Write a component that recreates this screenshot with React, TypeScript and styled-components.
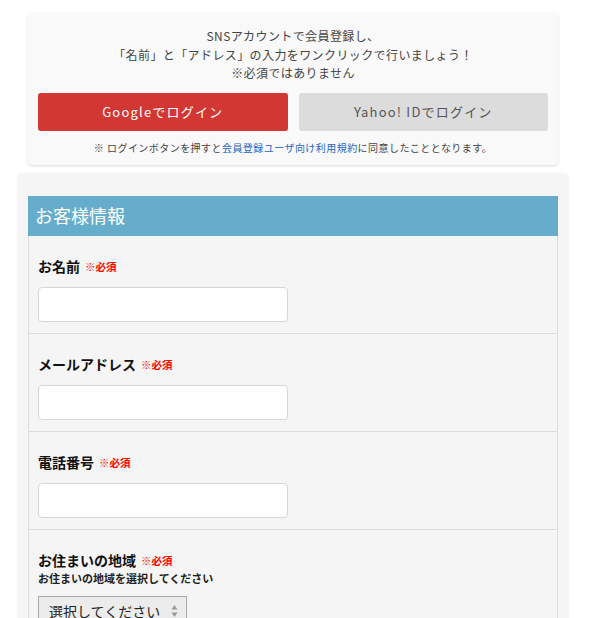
import React from "react";
import styled, { createGlobalStyle } from "styled-components";

const Global = createGlobalStyle`
  html, body { margin: 0; padding: 0; background: #fff; }
  body { font-family: "Noto Sans CJK JP", "Noto Sans", sans-serif; color: #333; }
  * { box-sizing: border-box; }
`;

const Page = styled.div`
  width: 550px;
  margin-left: 18px;
  padding-top: 13px;
  display: flex;
  flex-direction: column;
  gap: 9px;
`;

const SnsCard = styled.div`
  margin: 0 10px;
  background: #f9f9f9;
  border-radius: 4px;
  box-shadow: 0 1px 3px rgba(0, 0, 0, 0.14);
  padding: 14px 10px 9px;
  display: flex;
  flex-direction: column;
  align-items: center;
`;

const Intro = styled.p`
  margin: 0;
  font-size: 12px;
  line-height: 18.5px;
  letter-spacing: 0.4px;
  color: #444;
  text-align: center;
`;

const ButtonRow = styled.div`
  display: grid;
  grid-template-columns: 1fr 1fr;
  gap: 11px;
  width: 100%;
  margin-top: 10px;
`;

const LoginButton = styled.button<{ $variant: "google" | "yahoo" }>`
  height: 38px;
  border: none;
  border-radius: 3px;
  font-family: inherit;
  font-size: 13px;
  letter-spacing: 1.2px;
  background: ${(p) => (p.$variant === "google" ? "#d23733" : "#dcdcdc")};
  color: ${(p) => (p.$variant === "google" ? "#fff" : "#555")};
  cursor: pointer;
`;

const Note = styled.p`
  margin: 9px 0 0;
  font-size: 10px;
  line-height: 16px;
  letter-spacing: 0.45px;
  color: #444;
`;

const Link = styled.a`
  color: #1c64c4;
  text-decoration: none;
`;

const FormCard = styled.div`
  background: #f5f5f5;
  border-radius: 4px 4px 0 0;
  box-shadow: 0 0 3px rgba(0, 0, 0, 0.1);
  padding: 22px 10px 0;
`;

const Section = styled.div`
  border-left: 1px solid #dedede;
  border-right: 1px solid #dedede;
`;

const SectionHeader = styled.h2`
  margin: 0 -1px;
  height: 40px;
  background: #65adca;
  color: #fff;
  font-size: 18px;
  font-weight: 400;
  line-height: 38px;
  padding-left: 7px;
`;

const Row = styled.div`
  padding: 20px 9px 11px;
  border-bottom: 1px solid #dcdcdc;
  display: flex;
  flex-direction: column;
  align-items: flex-start;
`;

const Label = styled.div`
  display: flex;
  align-items: center;
  gap: 5px;
  height: 20px;
  margin-bottom: 11px;
  font-size: 14px;
  font-weight: 700;
  color: #111;
`;

const Required = styled.span`
  font-size: 10.5px;
  font-weight: 700;
  color: #f00;
  padding-top: 2px;
`;

const Hint = styled.div`
  font-size: 11px;
  font-weight: 700;
  color: #222;
  line-height: 16px;
  margin: -11px 0 10px;
`;

const TextInput = styled.input`
  width: 250px;
  height: 35px;
  border: 1px solid #d6d6d6;
  border-radius: 4px;
  background: #fff;
  outline: none;
`;

const SelectBox = styled.div`
  width: 149px;
  height: 30px;
  border: 1px solid #a9a9a9;
  background: #ececec;
  display: flex;
  align-items: center;
  justify-content: space-between;
  padding: 0 8px 0 10px;
  font-size: 14px;
  color: #222;
`;

const Arrows = () => (
  <svg width="7" height="14" viewBox="0 0 7 14">
    <path d="M3.5 1 L6.5 5.5 L0.5 5.5 Z" fill="#9a9a9a" />
    <path d="M3.5 13 L6.5 8.5 L0.5 8.5 Z" fill="#9a9a9a" />
  </svg>
);

const fields = [
  { label: "お名前" },
  { label: "メールアドレス" },
  { label: "電話番号" },
];

export default function App() {
  return (
    <>
      <Global />
      <Page>
        <SnsCard>
          <Intro>
            SNSアカウントで会員登録し、
            <br />
            「名前」と「アドレス」の入力をワンクリックで行いましょう！
            <br />
            ※必須ではありません
          </Intro>
          <ButtonRow>
            <LoginButton $variant="google">Googleでログイン</LoginButton>
            <LoginButton $variant="yahoo">Yahoo! IDでログイン</LoginButton>
          </ButtonRow>
          <Note>
            ※ ログインボタンを押すと<Link href="#">会員登録ユーザ向け利用規約</Link>に同意したこととなります。
          </Note>
        </SnsCard>
        <FormCard>
          <Section>
            <SectionHeader>お客様情報</SectionHeader>
            {fields.map((f) => (
              <Row key={f.label}>
                <Label>
                  {f.label}
                  <Required>※必須</Required>
                </Label>
                <TextInput type="text" />
              </Row>
            ))}
            <Row>
              <Label>
                お住まいの地域
                <Required>※必須</Required>
              </Label>
              <Hint>お住まいの地域を選択してください</Hint>
              <SelectBox>
                選択してください
                <Arrows />
              </SelectBox>
            </Row>
          </Section>
        </FormCard>
      </Page>
    </>
  );
}
